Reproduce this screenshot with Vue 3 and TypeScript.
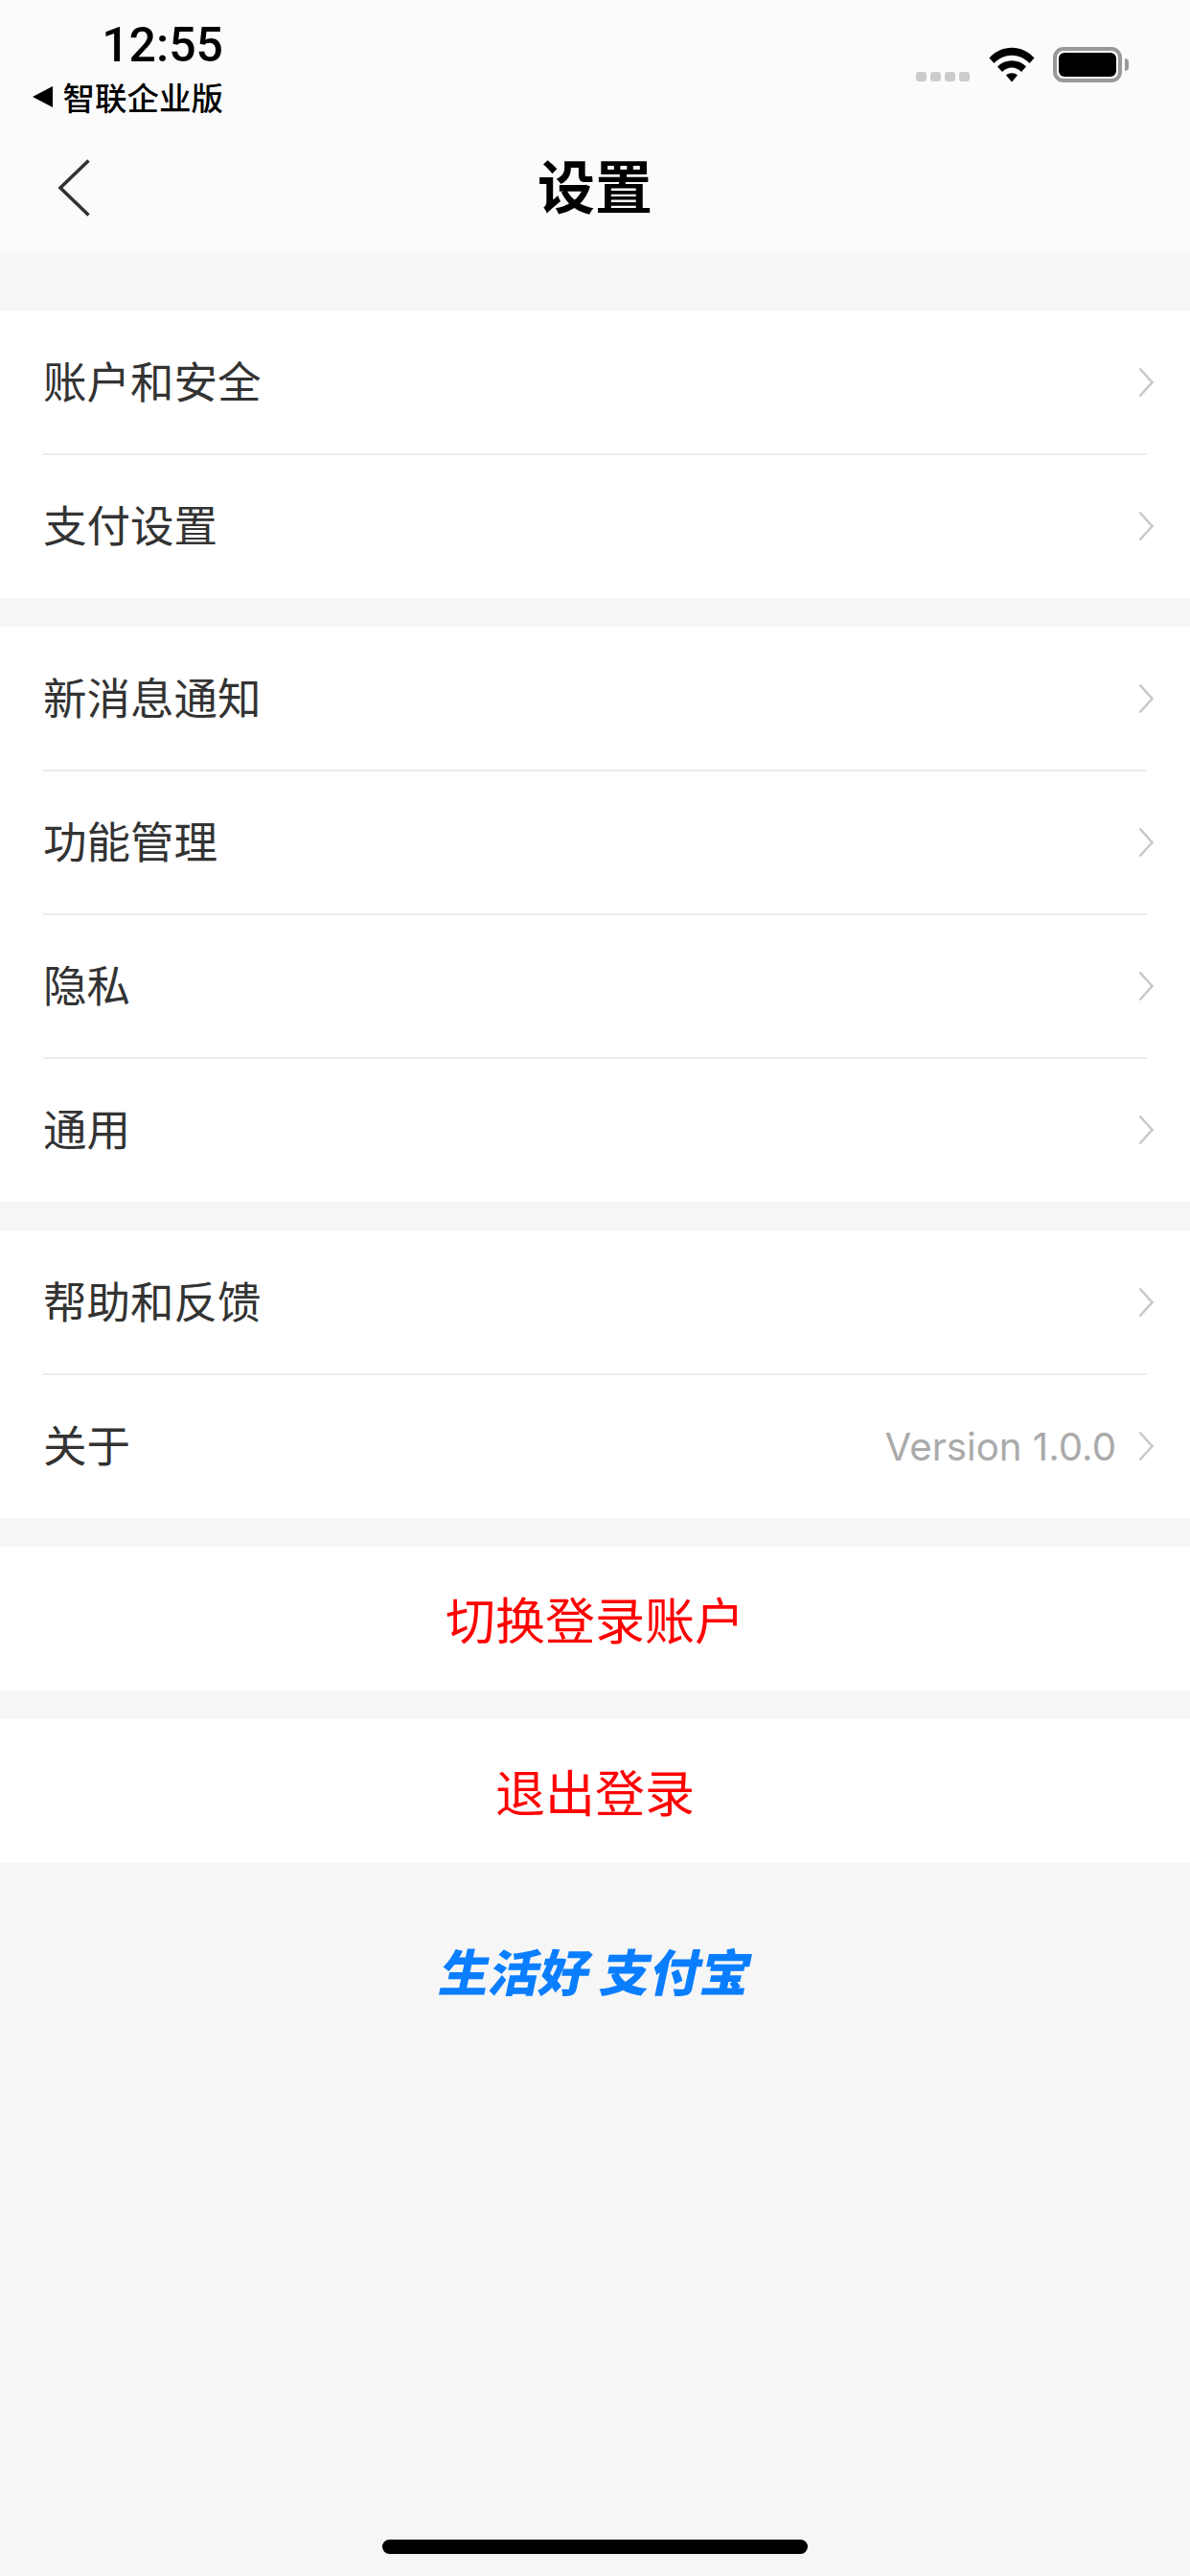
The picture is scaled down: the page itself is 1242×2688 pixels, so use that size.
<script setup lang="ts">
interface Row {
  label: string
  value?: string
}

const groups: Row[][] = [
  [{ label: '账户和安全' }, { label: '支付设置' }],
  [{ label: '新消息通知' }, { label: '功能管理' }, { label: '隐私' }, { label: '通用' }],
  [{ label: '帮助和反馈' }, { label: '关于', value: 'Version 1.0.0' }],
]

const actions = ['切换登录账户', '退出登录']
</script>

<template>
  <div class="page">
    <header class="top">
      <div class="status">
        <div class="status-left">
          <div class="time">12:55</div>
          <div class="back-app">
            <span class="tri"></span>
            <span>智联企业版</span>
          </div>
        </div>
        <div class="status-right">
          <div class="dots">
            <i v-for="n in 4" :key="n"></i>
          </div>
          <svg class="wifi" width="48" height="37" viewBox="0 0 48 37">
            <path d="M0.5 11.5 C13 -3 35 -3 47.5 11.5 L42.5 17 C32 6 16 6 5.5 17 Z" fill="#000" />
            <path d="M9 20.5 C17 12 31 12 39 20.5 L34 26 C28 20 20 20 14 26 Z" fill="#000" />
            <path d="M18 29.5 C21 26.5 27 26.5 30 29.5 L24 36.5 Z" fill="#000" />
          </svg>
          <div class="battery">
            <div class="battery-body"><div class="battery-fill"></div></div>
            <div class="battery-nub"></div>
          </div>
        </div>
      </div>
      <div class="nav">
        <svg class="back" width="34" height="60" viewBox="0 0 34 60">
          <path d="M32.5 1.5 L3 30 L32.5 58.5" fill="none" stroke="#333" stroke-width="3.6" />
        </svg>
        <h1 class="title">设置</h1>
      </div>
    </header>

    <section v-for="(group, i) in groups" :key="i" class="group">
      <div v-for="row in group" :key="row.label" class="row">
        <div class="row-inner">
          <span class="label">{{ row.label }}</span>
          <span v-if="row.value" class="value">{{ row.value }}</span>
          <svg class="chev" width="16" height="32" viewBox="0 0 16 32">
            <path d="M1.5 1.5 L14.5 16 L1.5 30.5" fill="none" stroke="#c8c8c8" stroke-width="2.6" />
          </svg>
        </div>
      </div>
    </section>

    <button v-for="a in actions" :key="a" class="action" type="button">{{ a }}</button>

    <div class="slogan"><span>生活好 支付宝</span></div>

    <div class="home"></div>
  </div>
</template>

<style scoped>
.page {
  position: relative;
  width: 1242px;
  height: 2688px;
  overflow: hidden;
  background: #f6f6f6;
  font-family: "Noto Sans CJK SC", "Liberation Sans", sans-serif;
  color: #333;
}
.top {
  height: 264px;
  background: #fbfbfb;
  margin-bottom: 60px;
}
.status {
  height: 126px;
  display: flex;
  justify-content: space-between;
}
.status-left {
  padding-left: 32px;
  width: 201px;
  display: flex;
  flex-direction: column;
  align-items: flex-end;
  padding-top: 23px;
}
.time {
  font-family: Roboto, "Liberation Sans", sans-serif;
  font-weight: 500;
  font-size: 50px;
  line-height: 48px;
  color: #000;
}
.back-app {
  display: flex;
  align-items: center;
  font-size: 33.5px;
  font-weight: 500;
  line-height: 48px;
  color: #000;
  margin-top: 6px;
  white-space: nowrap;
}
.tri {
  width: 0;
  height: 0;
  border-top: 11px solid transparent;
  border-bottom: 11px solid transparent;
  border-right: 21px solid #000;
  margin-right: 11px;
}
.status-right {
  display: flex;
  align-items: flex-start;
  padding: 49px 64px 0 0;
}
.dots {
  display: flex;
  gap: 4px;
  margin-top: 26px;
  margin-right: 20px;
}
.dots i {
  width: 11px;
  height: 10px;
  border-radius: 3px;
  background: #ccc;
}
.wifi {
  margin-right: 19px;
}
.battery {
  display: flex;
  align-items: center;
}
.battery-body {
  box-sizing: border-box;
  width: 72px;
  height: 37px;
  border: 4px solid #999;
  border-radius: 11px;
  padding: 2px;
}
.battery-fill {
  height: 100%;
  background: #000;
  border-radius: 6px;
}
.battery-nub {
  width: 4px;
  height: 13px;
  margin-left: 3px;
  background: #999;
  border-radius: 0 6px 6px 0;
}
.nav {
  position: relative;
  height: 138px;
  display: flex;
  align-items: center;
  justify-content: center;
}
.back {
  position: absolute;
  left: 60px;
  top: 40px;
}
.title {
  margin: 0;
  font-size: 60px;
  line-height: 72px;
  font-weight: 700;
  color: #000;
  position: relative;
  top: -3px;
}
.group {
  background: #fff;
  margin-bottom: 30px;
}
.row {
  height: 150px;
  padding: 0 45px;
}
.row-inner {
  height: calc(100% + 1px);
  box-sizing: border-box;
  display: flex;
  align-items: center;
  border-bottom: 2px solid #ececec;
}
.row:last-child .row-inner {
  height: 100%;
  border-bottom: none;
}
.label {
  flex: 1;
  font-size: 45.5px;
  line-height: 60px;
  padding-bottom: 6px;
  color: #333;
}
.value {
  font-family: Inter, "Liberation Sans", sans-serif;
  font-weight: 400;
  font-size: 40.2px;
  color: #aaa;
  margin-right: 23px;
}
.chev {
  margin-right: -7px;
}
.action {
  display: block;
  width: 100%;
  height: 150px;
  margin: 0 0 30px;
  padding: 0 0 2px;
  border: none;
  background: #fff;
  color: #f00;
  font-family: inherit;
  font-size: 52px;
}
.slogan {
  text-align: center;
  padding-top: 46px;
}
.slogan span {
  display: inline-block;
  font-size: 52px;
  line-height: 72px;
  font-weight: 900;
  color: #0a7eff;
  transform: translateX(2px) skewX(-12deg);
}
.home {
  position: absolute;
  left: 399px;
  top: 2650px;
  width: 444px;
  height: 15px;
  border-radius: 8px;
  background: #000;
}
</style>

<style>
body {
  margin: 0;
  background: #f6f6f6;
}
</style>
